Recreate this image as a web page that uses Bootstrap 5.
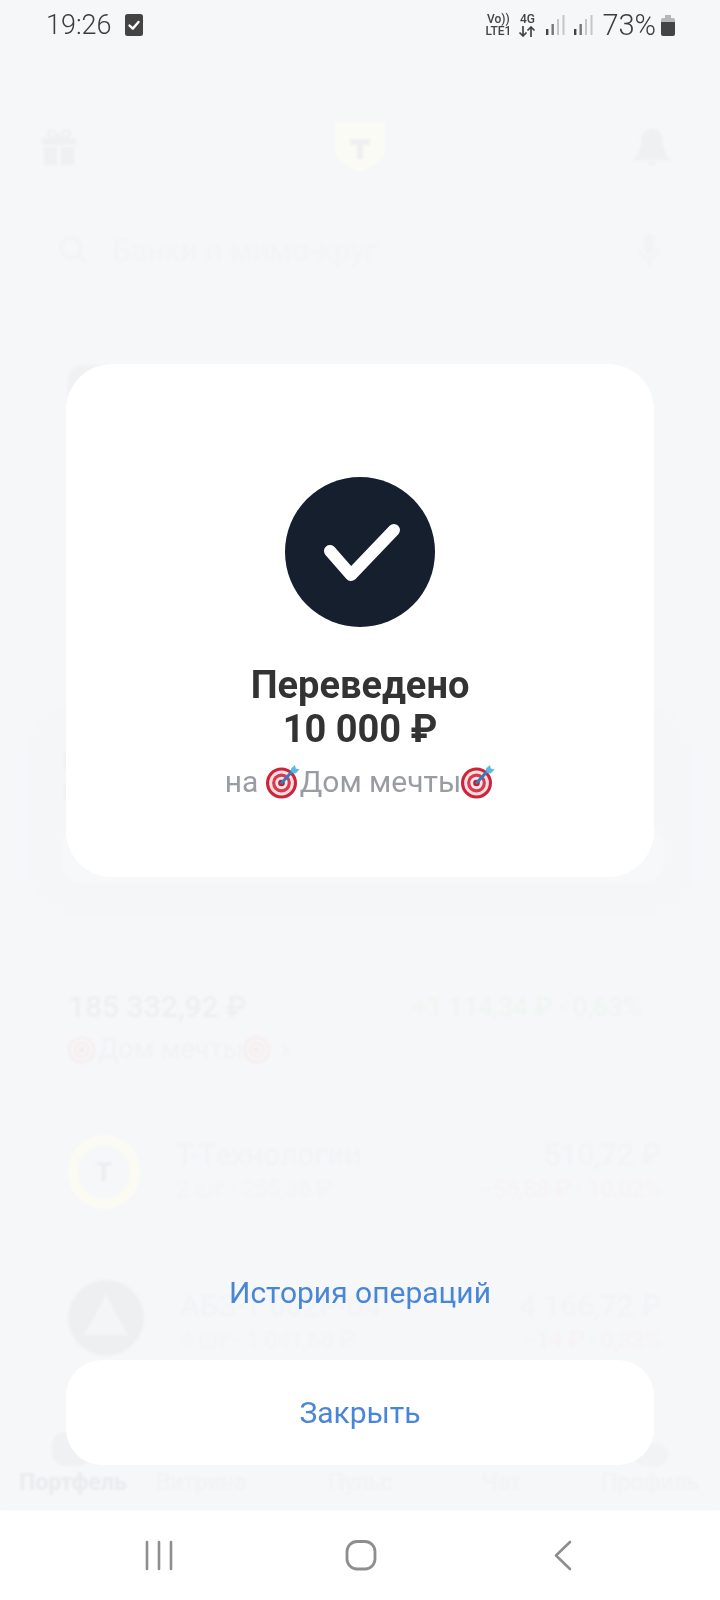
<!DOCTYPE html>
<html lang="ru">
<head>
<meta charset="utf-8">
<title>Переведено</title>
<link href="https://cdn.jsdelivr.net/npm/bootstrap@5.3.0/dist/css/bootstrap.min.css" rel="stylesheet">
<style>
html,body{margin:0;background:#f6f7f9}
.phone{width:720px;height:1600px;font-family:Roboto,"Liberation Sans",sans-serif;background:#f6f7f9;overflow:hidden}
.status{height:50px;padding:0 45px 0 46px;color:#3c3c3c;z-index:2}
.clock{font-size:27px;line-height:1;font-weight:300}
.clock-ic{margin-left:13px}
.pct{font-size:29px;line-height:1;font-weight:300;margin-left:9px;margin-right:5px}
.net{font-size:12px;line-height:12px;font-weight:500;color:#444;white-space:nowrap}
.net-a{margin-right:7px}
.net-b{margin-right:10px}
.net-b svg{display:block;margin:1px auto 0}
.sig{margin-right:9px}
.app{height:1460px;filter:blur(.9px);color:#f1f3f5}
.head{height:60px;margin-top:67px;padding:0 50px 0 40px}
.shield{margin-left:8px}
.searchline{height:50px;margin-top:48px;padding:0 60px 0 58px;font-size:30px;color:#f2f4f5}
.story{width:120px;height:150px;margin:90px 0 0 68px;background:#eff1f2;border-radius:14px}
.promo{height:205px;margin:192px 30px 0 32px;background:#f4f6f7;border-radius:34px 44px 34px 34px;padding:38px 26px 0 30px;font-size:24px;line-height:32px;color:#edeff1}
.promo-btn{height:58px;background:#f6f8f9;border-radius:20px;margin-top:16px}
.sum-row{margin:78px 78px 0 68px;font-size:30px;line-height:34px;font-weight:500;color:#eeeff1}
.gain{color:#eef6f0;font-size:26px}
.goal{margin:7px 0 0 68px;font-size:27px;line-height:36px;color:#f0f2f4}
.asset{padding:0 59px 0 68px;height:80px;font-size:30px;line-height:36px}
.asset-a{margin-top:65px}
.asset-b{margin-top:66px}
.asset-b .asset-name,.asset-b .asset-end{padding-top:9px}
.logo-ring{width:72px;height:74px;border-radius:50%;background:#f6f7f9;border:10px solid #fbfbf4;color:#edeef0;font-weight:900;font-size:26px;flex:none}
.logo-abz{width:76px;height:76px;border-radius:50%;background:#eeeff1;flex:none}
.asset-name{margin-left:36px;flex:1}
.sub-text{font-size:23px;line-height:34px;color:#f3f4f6}
.loss{color:#f7f2f3;font-size:23px;line-height:34px}
.tabs{margin-top:auto;height:80px;padding:33px 0 0 19px;font-size:23px;line-height:40px;background:#f5f7f8;color:#f1f3f4;display:grid;grid-template-columns:137px 172px 154px 119px 1fr}
.tabs b{color:#eaecee;font-weight:700}
.tab-ic{left:52px;top:2px;width:40px;height:34px;background:#eff1f2;border-radius:14px}
.tab-ic-r{left:634px;top:14px;width:34px;height:22px;background:#f1f3f4;border-radius:12px}
.navbtns{height:90px;background:#fff}
.navbtns svg{display:block}
.overlay{top:50px;left:0;right:0;height:1460px;padding:314px 66px 45px}
.sheet{height:513px;background:#fff;border:0;border-radius:46px;padding-top:113px}
.title-big{font-size:38px;line-height:44px;font-weight:700;color:#333;margin-top:36px}
.to-line{font-size:30px;line-height:34px;color:#9a9ca3;margin-top:14px}
.to-line svg{vertical-align:-7px}
.ghost{color:#4a86d8;font-size:30px;line-height:36px;padding:0;border:0;background:none}
.ghost:hover{color:#4a86d8;background:none}
.history-btn{margin-top:auto;margin-bottom:49px}
.close-btn{height:105px;background:#fff;border-radius:36px;color:#4a86d8;font-size:30px;border:0}
.close-btn:hover{background:#fff;color:#4a86d8}
</style>
</head>
<body>
<svg width="0" height="0" class="position-absolute">
  <defs>
    <symbol id="target" viewBox="0 0 34 34">
      <circle cx="15.5" cy="18" r="15.5" fill="#cf2438"/>
      <circle cx="15.5" cy="18" r="12.4" fill="#f6dfe2"/>
      <circle cx="15.5" cy="18" r="9.4" fill="#d83a4e"/>
      <circle cx="15.5" cy="18" r="6.2" fill="#f8e6e8"/>
      <circle cx="15.5" cy="18" r="3.3" fill="#c9172c"/>
      <path d="M15.5 18 27 5.5" stroke="#3b78b8" stroke-width="3" stroke-linecap="round"/>
      <path d="M25 3.5 29 0l.8 3.6L33.5 4.5 29.5 8.5 25.5 7.5z" fill="#57bbe8"/>
    </symbol>
    <symbol id="target-pale" viewBox="0 0 34 34">
      <circle cx="15.5" cy="18" r="15.5" fill="#f6eeee"/>
      <circle cx="15.5" cy="18" r="12.4" fill="#f6f6f8"/>
      <circle cx="15.5" cy="18" r="9.4" fill="#f6eeee"/>
      <circle cx="15.5" cy="18" r="6.2" fill="#f6f6f8"/>
      <circle cx="15.5" cy="18" r="3.3" fill="#f5ecec"/>
    </symbol>
  </defs>
</svg>
<div class="phone position-relative d-flex flex-column">
  <div class="status d-flex align-items-center justify-content-between position-relative">
    <div class="d-flex align-items-center">
      <span class="clock">19:26</span>
      <svg class="clock-ic" width="18" height="22" viewBox="0 0 18 22"><rect width="18" height="22" rx="2.5" fill="#444"/><path d="M4.5 11.5 7.8 14.6 13.5 8" fill="none" stroke="#fff" stroke-width="2.4" stroke-linecap="round" stroke-linejoin="round"/></svg>
    </div>
    <div class="d-flex align-items-center">
      <div class="net net-a text-center"><div>Vo))</div><div>LTE1</div></div>
      <div class="net net-b text-center"><div>4G</div>
        <svg width="18" height="11" viewBox="0 0 18 11"><path d="M5 0v10M1.5 6.5 5 10l3.500-3.500M13 11V1M9.500 4.500 13 1l3.500 3.500" fill="none" stroke="#444" stroke-width="1.700"/></svg>
      </div>
      <svg class="sig" width="19" height="20" viewBox="0 0 19 20"><rect x="0" y="14" width="2.4" height="6" fill="#444"/><rect x="5.5" y="9" width="2.4" height="11" fill="#777"/><rect x="11" y="4" width="2" height="16" fill="#c4c6c8"/><rect x="16.5" y="0" width="2" height="20" fill="#c4c6c8"/></svg>
      <svg width="19" height="20" viewBox="0 0 19 20"><rect x="0" y="14" width="2.4" height="6" fill="#444"/><rect x="5.5" y="9" width="2.4" height="11" fill="#777"/><rect x="11" y="4" width="2" height="16" fill="#c4c6c8"/><rect x="16.5" y="0" width="2" height="20" fill="#c4c6c8"/></svg>
      <span class="pct">73%</span>
      <svg width="14" height="21" viewBox="0 0 14 21"><path d="M4 0h6v3h2a2 2 0 0 1 2 2v2H0V5a2 2 0 0 1 2-2h2z" fill="#b5b7b9"/><path d="M0 7h14v12a2 2 0 0 1-2 2H2a2 2 0 0 1-2-2z" fill="#444"/></svg>
    </div>
  </div>

  <div class="app d-flex flex-column">
    <div class="head d-flex align-items-center justify-content-between">
      <svg width="38" height="38" viewBox="0 0 38 38"><path d="M2 10h34v7H2zM4 19h13v18H4zM21 19h13v18H21z" fill="#eff0f2"/><path d="M19 10c-4-8-11-9-11-5s6 5 11 5c5 0 11-1 11-5s-7-3-11 5z" fill="none" stroke="#eff0f2" stroke-width="3"/></svg>
      <svg class="shield" width="52" height="52" viewBox="0 0 52 52"><path d="M1 1h50v27c0 12-14 17-25 23C15 45 1 40 1 28z" fill="#fbfbf5"/><path d="M16 18h20v6h-7v14h-6V24h-7z" fill="#eeeff0"/></svg>
      <svg width="36" height="36" viewBox="0 0 36 36"><path d="M18 0c7 0 11 5 11 12 0 9 3 13 7 19H0c4-6 7-10 7-19C7 5 11 0 18 0zM13 33h10c-1 2-3 3-5 3s-4-1-5-3z" fill="#eff0f2"/></svg>
    </div>
    <div class="searchline d-flex align-items-center">
      <svg width="30" height="30" viewBox="0 0 30 30"><circle cx="13" cy="13" r="10" fill="none" stroke="#f1f3f4" stroke-width="3"/><path d="m21 21 7 7" stroke="#f1f3f4" stroke-width="3"/></svg>
      <span class="ms-4 flex-grow-1">Банки и мимо-круг</span>
      <svg width="22" height="34" viewBox="0 0 22 34"><rect x="6" y="0" width="10" height="22" rx="5" fill="#f1f3f4"/><path d="M2 16c0 12 18 12 18 0M11 26v8" fill="none" stroke="#f1f3f4" stroke-width="2.5"/></svg>
    </div>
    <div class="story"></div>
    <div class="promo">
      <div>Ц</div>
      <div>П</div>
      <div class="promo-btn"></div>
    </div>
    <div class="sum-row d-flex justify-content-between align-items-center">
      <span>185 332,92 ₽</span>
      <span class="gain">+1 114,34 ₽ · 0,63%</span>
    </div>
    <div class="goal d-flex align-items-center">
      <svg width="30" height="30"><use href="#target-pale"/></svg>Дом мечты<svg width="30" height="30"><use href="#target-pale"/></svg><span class="ms-2">›</span>
    </div>
    <div class="asset asset-a d-flex align-items-center">
      <div class="logo-ring d-flex align-items-center justify-content-center">Т</div>
      <div class="asset-name"><div>Т-Технологии</div><div class="sub-text">2 шт · 255,36 ₽</div></div>
      <div class="asset-end text-end"><div>510,72 ₽</div><div class="loss">−56,88 ₽ · 10,02%</div></div>
    </div>
    <div class="asset asset-b d-flex align-items-center">
      <div class="logo-abz d-flex align-items-center justify-content-center">
        <svg width="44" height="50" viewBox="0 0 44 50"><path d="M22 0C28 14 36 28 44 42H0C8 28 16 14 22 0z" fill="#f4f5f6"/></svg>
      </div>
      <div class="asset-name"><div>АБЗ-1 002Р-04</div><div class="sub-text">4 шт · 1 041,68 ₽</div></div>
      <div class="asset-end text-end"><div>4 166,72 ₽</div><div class="loss">−14 ₽ · 0,33%</div></div>
    </div>
    <div class="tabs position-relative">
      <span class="tab-ic position-absolute"></span>
      <span class="tab-ic-r position-absolute"></span>
      <b>Портфель</b><span>Витрина</span><span>Пульс</span><span>Чат</span><span>Профиль</span>
    </div>
  </div>

  <div class="navbtns d-flex align-items-center">
    <svg width="720" height="90" viewBox="0 0 720 90">
      <path d="M147 32v27M159 32v27M171 32v27" stroke="#8e8e8e" stroke-width="2.6" stroke-linecap="round"/>
      <rect x="347" y="31.5" width="28" height="27.5" rx="10" fill="none" stroke="#8e8e8e" stroke-width="2.8"/>
      <path d="M570 32 556 45.500 570 59" fill="none" stroke="#8e8e8e" stroke-width="2.6" stroke-linecap="round" stroke-linejoin="round"/>
    </svg>
  </div>

  <div class="overlay position-absolute d-flex flex-column">
    <div class="card sheet text-center align-items-center">
      <svg width="150" height="150" viewBox="0 0 150 150">
        <circle cx="75" cy="75" r="75" fill="#151f2e"/>
        <path d="M45 74 66 98 109 53" fill="none" stroke="#fff" stroke-width="12" stroke-linecap="round" stroke-linejoin="round"/>
      </svg>
      <div class="title-big">Переведено<br>10 000 ₽</div>
      <div class="to-line">на <svg width="34" height="34"><use href="#target"/></svg>Дом мечты<svg width="34" height="34"><use href="#target"/></svg></div>
    </div>
    <button type="button" class="btn ghost history-btn align-self-center">История операций</button>
    <button type="button" class="btn close-btn w-100">Закрыть</button>
  </div>
</div>
</body>
</html>
